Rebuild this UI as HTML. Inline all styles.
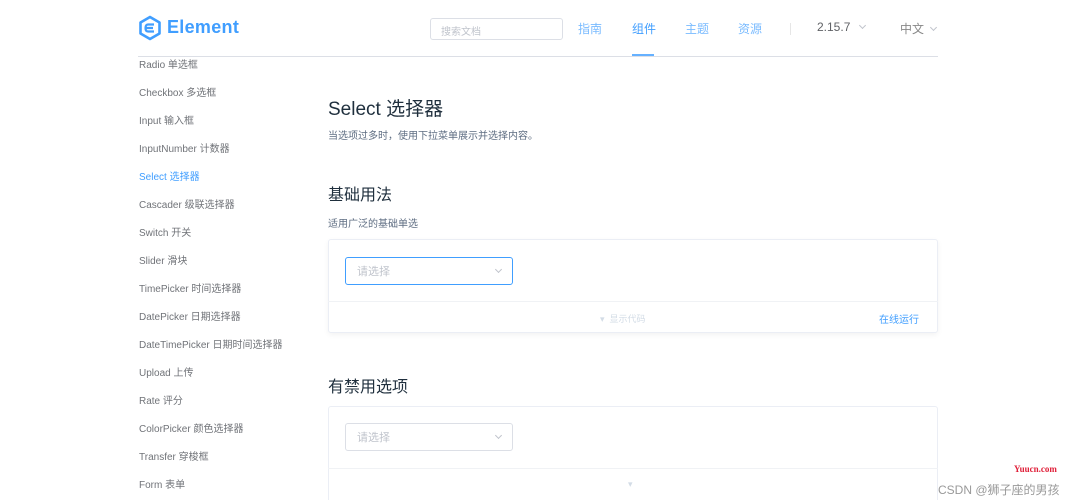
<!DOCTYPE html>
<html><head><meta charset="utf-8"><style>
*{margin:0;padding:0;box-sizing:border-box}
html,body{width:1076px;height:500px;overflow:hidden}
body{background:#fff;font-family:"Liberation Sans","Noto Sans CJK SC",sans-serif;position:relative;color:#1f2f3d}
.a{position:absolute;white-space:nowrap}
.hdr{position:absolute;left:138px;top:56px;width:800px;height:1px;background:#dcdfe6}
.side{font-size:10px;color:#707378}
.box{position:absolute;border:1px solid #ebeef5;border-radius:3px;background:#fff}
.sel{position:absolute;border:1px solid #dcdfe6;border-radius:3px;background:#fff;font-size:11px;color:#c0c4cc;padding:0 11px;display:flex;align-items:center;justify-content:space-between}
.chev{display:inline-block;width:5px;height:5px;border-right:1px solid #c0c4cc;border-bottom:1px solid #c0c4cc;transform:rotate(45deg);margin-bottom:3px}
</style></head><body>
<svg class="a" style="left:138px;top:15px" width="24" height="26" viewBox="0 0 24 26"><path d="M12 2 L21.5 7.5 V18.5 L12 24 L2.5 18.5 V7.5 Z" fill="none" stroke="#409eff" stroke-width="2.6" stroke-linejoin="round"/><path d="M16 9.5 H10 Q7.5 9.5 7.5 13 Q7.5 16.5 10 16.5 H16 M8 13 H15" fill="none" stroke="#409eff" stroke-width="2.2"/></svg>
<div class="a" style="left:167px;top:17px;font-size:18px;font-weight:bold;color:#409eff;letter-spacing:0.3px">Element</div>
<div class="a" style="left:430px;top:18px;width:133px;height:22px;border:1px solid #dcdfe6;border-radius:3px;font-size:10px;color:#c0c4cc;padding:4px 10px">搜索文档</div>
<div class="a" style="left:578px;top:20px;font-size:12px;color:#409eff;opacity:.7">指南</div>
<div class="a" style="left:632px;top:20px;font-size:12px;color:#409eff">组件</div>
<div class="a" style="left:632px;top:54px;width:22px;height:2px;background:#409eff;opacity:.8"></div>
<div class="a" style="left:685px;top:20px;font-size:12px;color:#409eff;opacity:.7">主题</div>
<div class="a" style="left:738px;top:20px;font-size:12px;color:#409eff;opacity:.7">资源</div>
<div class="a" style="left:790px;top:23px;width:1px;height:12px;background:#e6e6e6"></div>
<div class="a" style="left:817px;top:20px;font-size:12px;color:#606266">2.15.7 <span class="chev" style="margin-left:6px"></span></div>
<div class="a" style="left:900px;top:20px;font-size:12px;color:#888">中文 <span class="chev" style="margin-left:4px"></span></div>
<div class="hdr"></div>
<div class="a side" style="left:139px;top:56px">Radio 单选框</div>
<div class="a side" style="left:139px;top:84px">Checkbox 多选框</div>
<div class="a side" style="left:139px;top:112px">Input 输入框</div>
<div class="a side" style="left:139px;top:140px">InputNumber 计数器</div>
<div class="a side" style="left:139px;top:168px;color:#409eff">Select 选择器</div>
<div class="a side" style="left:139px;top:196px">Cascader 级联选择器</div>
<div class="a side" style="left:139px;top:224px">Switch 开关</div>
<div class="a side" style="left:139px;top:252px">Slider 滑块</div>
<div class="a side" style="left:139px;top:280px">TimePicker 时间选择器</div>
<div class="a side" style="left:139px;top:308px">DatePicker 日期选择器</div>
<div class="a side" style="left:139px;top:336px">DateTimePicker 日期时间选择器</div>
<div class="a side" style="left:139px;top:364px">Upload 上传</div>
<div class="a side" style="left:139px;top:392px">Rate 评分</div>
<div class="a side" style="left:139px;top:420px">ColorPicker 颜色选择器</div>
<div class="a side" style="left:139px;top:448px">Transfer 穿梭框</div>
<div class="a side" style="left:139px;top:476px">Form 表单</div>
<div class="a" style="left:328px;top:94px;font-size:19px">Select 选择器</div>
<div class="a" style="left:328px;top:127px;font-size:10px;color:#5e6d82">当选项过多时，使用下拉菜单展示并选择内容。</div>
<div class="a" style="left:328px;top:181px;font-size:16px">基础用法</div>
<div class="a" style="left:328px;top:215px;font-size:10px;color:#5e6d82">适用广泛的基础单选</div>
<div class="box" style="left:328px;top:239px;width:610px;height:94px;box-shadow:0 2px 6px rgba(0,0,0,.05)"></div>
<div class="a" style="left:328px;top:301px;width:610px;height:1px;background:#f0f2f5"></div>
<div class="sel" style="left:345px;top:257px;width:168px;height:28px;border-color:#409eff"><span>请选择</span><span class="chev"></span></div>
<div class="a" style="left:600px;top:312px;font-size:9px;color:#d3dce6">▾ &nbsp;显示代码</div>
<div class="a" style="left:879px;top:311px;font-size:10px;color:#409eff">在线运行</div>
<div class="a" style="left:328px;top:373px;font-size:16px">有禁用选项</div>
<div class="box" style="left:328px;top:406px;width:610px;height:100px"></div>
<div class="a" style="left:328px;top:468px;width:610px;height:1px;background:#f0f2f5"></div>
<div class="sel" style="left:345px;top:423px;width:168px;height:28px"><span>请选择</span><span class="chev"></span></div>
<div class="a" style="left:628px;top:479px;font-size:9px;color:#d3dce6">▾</div>
<div class="a" style="left:1014px;top:464px;font-size:9px;font-weight:bold;color:#e0203a;font-family:'Liberation Serif',serif">Yuucn.com</div>
<div class="a" style="left:938px;top:481px;font-size:12px;color:#999">CSDN @狮子座的男孩</div>
</body></html>
